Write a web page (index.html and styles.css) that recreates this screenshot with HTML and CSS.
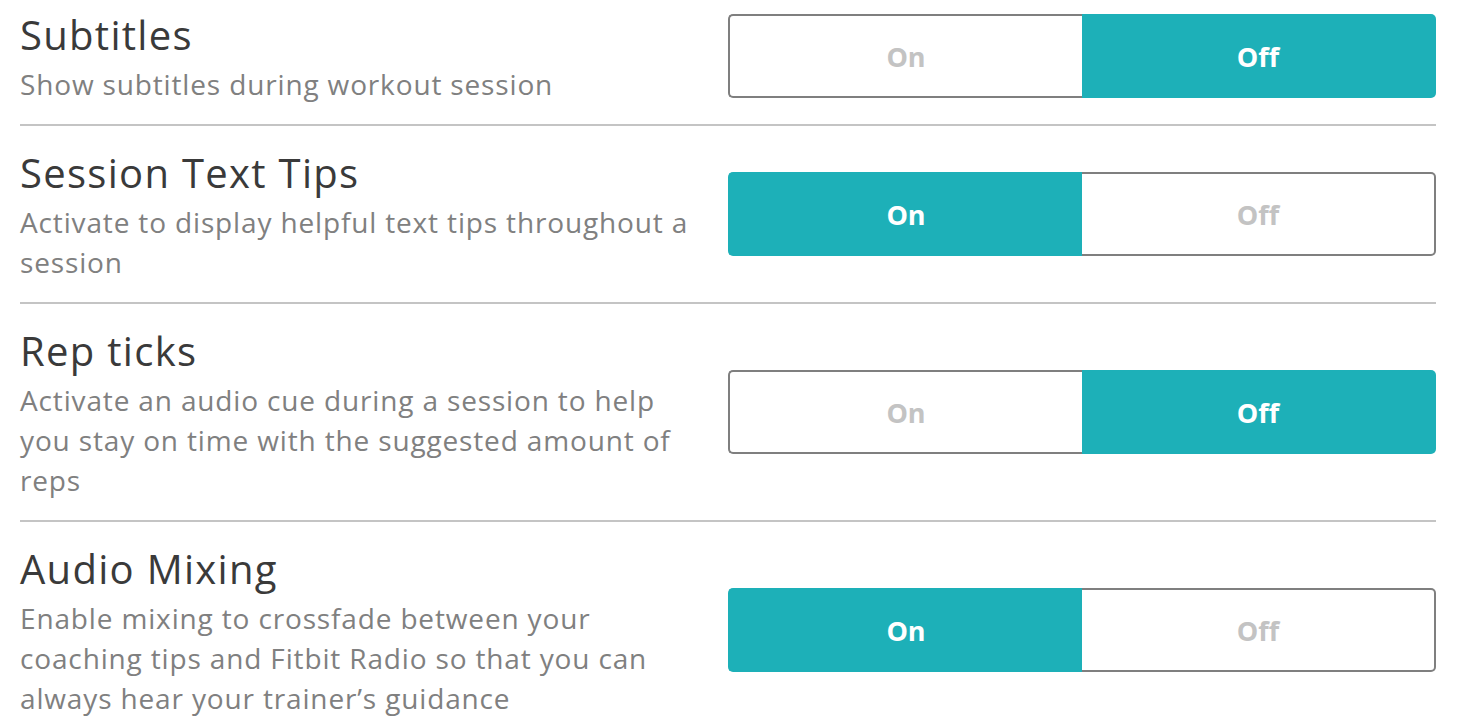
FILE: index.html
```html
<!DOCTYPE html>
<html lang="en">
<head>
<meta charset="utf-8">
<title>Workout settings</title>
<link rel="stylesheet" href="styles.css">
</head>
<body>
<div class="settings">
  <div class="row">
    <div class="info">
      <div class="title">Subtitles</div>
      <div class="desc">Show subtitles during workout session</div>
    </div>
    <div class="toggle">
      <div class="opt opt-left">On</div>
      <div class="opt opt-right active">Off</div>
    </div>
  </div>
  <div class="row">
    <div class="info">
      <div class="title">Session Text Tips</div>
      <div class="desc">Activate to display helpful text tips throughout a session</div>
    </div>
    <div class="toggle">
      <div class="opt opt-left active">On</div>
      <div class="opt opt-right">Off</div>
    </div>
  </div>
  <div class="row">
    <div class="info">
      <div class="title">Rep ticks</div>
      <div class="desc">Activate an audio cue during a session to help you stay on time with the suggested amount of reps</div>
    </div>
    <div class="toggle">
      <div class="opt opt-left">On</div>
      <div class="opt opt-right active">Off</div>
    </div>
  </div>
  <div class="row">
    <div class="info">
      <div class="title">Audio Mixing</div>
      <div class="desc">Enable mixing to crossfade between your coaching tips and Fitbit Radio so that you can always hear your trainer’s guidance</div>
    </div>
    <div class="toggle">
      <div class="opt opt-left active">On</div>
      <div class="opt opt-right">Off</div>
    </div>
  </div>
</div>
</body>
</html>
```

FILE: styles.css
```css
html, body {
  margin: 0;
  padding: 0;
  background: #ffffff;
}

body {
  font-family: "Open Sans", "Liberation Sans", sans-serif;
  overflow: hidden;
}

.settings {
  margin: -12px 22px 0 20px;
}

.row {
  display: flex;
  align-items: center;
  gap: 20px;
  padding: 23px 0 20px 0;
  border-bottom: 2px solid #c4c4c4;
}

.info {
  flex: 1;
  min-width: 0;
}

.title {
  font-size: 40px;
  line-height: 48px;
  color: #3a3a3a;
  font-weight: 400;
  letter-spacing: 1.3px;
  margin-bottom: 5px;
}

.desc {
  font-size: 28px;
  line-height: 40px;
  color: #808080;
  letter-spacing: 0.85px;
}

.toggle {
  flex: 0 0 708px;
  height: 84px;
  display: flex;
  margin-top: -3px;
}

.opt {
  flex: 1;
  display: flex;
  align-items: center;
  justify-content: center;
  font-size: 27px;
  font-weight: 700;
  color: #c3c3c3;
  background: #ffffff;
  border: 2px solid #7f7f7f;
  box-sizing: border-box;
}

.opt-left {
  border-right: none;
  border-radius: 5px 0 0 5px;
}

.opt-right {
  border-left: none;
  border-radius: 0 5px 5px 0;
}

.opt.active {
  background: #1db0b8;
  border-color: #1db0b8;
  color: #ffffff;
}
```
